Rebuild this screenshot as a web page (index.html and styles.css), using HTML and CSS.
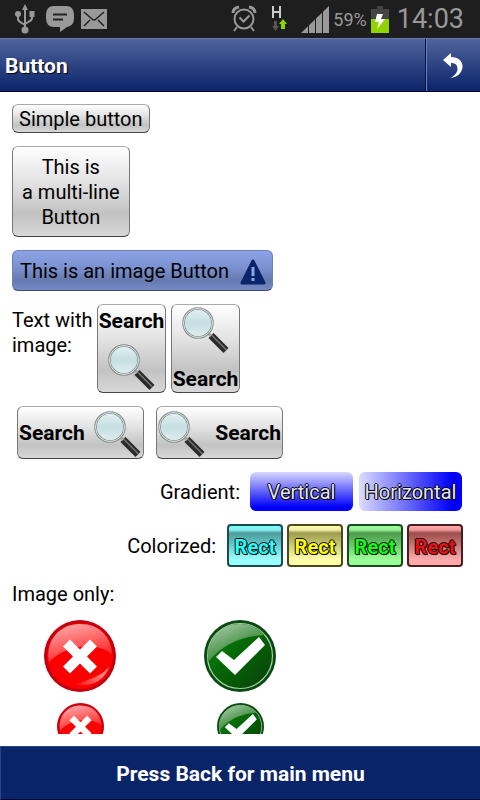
FILE: index.html
```html
<!DOCTYPE html>
<html lang="en">
<head>
  <meta charset="UTF-8">
  <meta name="viewport" content="width=device-width, initial-scale=1.0">
  <title>Button</title>
  <link rel="stylesheet" href="styles.css">
</head>
<body>
  <!-- shared icons -->
  <svg class="sprite" aria-hidden="true">
    <defs>
      <linearGradient id="lens" x1="0" y1="0" x2="0" y2="1">
        <stop offset="0" stop-color="#e2f1f3"/>
        <stop offset="0.5" stop-color="#c5dfe2"/>
        <stop offset="1" stop-color="#e0eeef"/>
      </linearGradient>
      <linearGradient id="red-shine" x1="0" y1="0" x2="0.4" y2="1">
        <stop offset="0" stop-color="#ffb4b4"/>
        <stop offset="1" stop-color="#ff2828"/>
      </linearGradient>
      <linearGradient id="red-glow" x1="0" y1="0.5" x2="1" y2="0.5">
        <stop offset="0" stop-color="#fa0000"/>
        <stop offset="1" stop-color="#ff9a9a"/>
      </linearGradient>
      <linearGradient id="green-base" x1="0" y1="0" x2="1" y2="1">
        <stop offset="0" stop-color="#0a8a0a"/>
        <stop offset="0.5" stop-color="#046404"/>
        <stop offset="1" stop-color="#0b3d0b"/>
      </linearGradient>
      <linearGradient id="green-shine" x1="0" y1="0" x2="0.7" y2="1">
        <stop offset="0" stop-color="#b4d4b4"/>
        <stop offset="1" stop-color="#0d6d0d"/>
      </linearGradient>
    </defs>
    <symbol id="magnifier" viewBox="0 0 48 48">
      <path d="M29 29.500L44 44.500" stroke="#2a2a2a" stroke-width="7"/>
      <path d="M30 29.500L44.500 44" stroke="#777" stroke-width="1.500"/>
      <path d="M26 27l3 3" stroke="#aaa" stroke-width="3"/>
      <circle cx="16" cy="17" r="14.500" fill="url(#lens)" stroke="#858a8a" stroke-width="2.500"/>
      <circle cx="16" cy="17" r="14.500" fill="none" stroke="#dfe4e4" stroke-width="1"/>
    </symbol>
    <symbol id="cross" viewBox="0 0 72 72">
      <circle cx="36" cy="36" r="36" fill="#c40010"/>
      <circle cx="36" cy="36" r="33" fill="#fa0000"/>
      <path d="M5 42C1 20 16 4 36 4s31 13 32 30C50 20 20 26 5 42z" fill="url(#red-shine)"/>
      <path d="M30 65c18 2 30-4 35-18-8 9-16 11-35 18z" fill="url(#red-glow)"/>
      <path d="M26 19.500l10 10 10-10 7 7-10 10 10 10-7 7-10-10-10 10-7-7 10-10-10-10z" fill="#fff"/>
    </symbol>
    <symbol id="check" viewBox="0 0 72 72">
      <circle cx="36" cy="36" r="36" fill="#0a4a10"/>
      <circle cx="36" cy="36" r="32.500" fill="url(#green-base)" stroke="#a8cfa8" stroke-width="1.200"/>
      <path d="M4 42C1 21 15 4 36 4c11 0 19 4 25 11C38 16 19 24 4 42z" fill="url(#green-shine)"/>
      <path d="M12 37l6-6 12 9 25-23 6 8-30 30z" fill="#fff"/>
    </symbol>
  </svg>

  <div class="status-bar">
    <div class="status-left">
      <svg width="20" height="30" viewBox="0 0 20 30" fill="none" stroke="#999" stroke-width="2">
        <path d="M10 4v22M3 11v4q0 2 3 3.500L10 21M17 10v4q0 2-3 3.500L10 20"/>
        <path d="M10 0l3 6H7z" fill="#999" stroke="none"/>
        <circle cx="3" cy="10" r="3" fill="#999" stroke="none"/>
        <path d="M14.500 7h5v6h-5z" fill="#999" stroke="none"/>
        <circle cx="10" cy="26" r="3.500" fill="#999" stroke="none"/>
      </svg>
      <svg width="30" height="28" viewBox="0 0 30 28">
        <path d="M9 1h12q8 0 8 9v3q0 8-7 9l-7 5v-5H9q-8 0-8-9v-3q0-9 8-9z" fill="#999"/>
        <path d="M8 9.500h14M8 14.500h10" stroke="#222" stroke-width="2"/>
      </svg>
      <svg width="26" height="20" viewBox="0 0 26 20">
        <path d="M0 0h26v20H0z" fill="#999"/>
        <path d="M3 3l8 7q2 2 4 0l8-7M3 17l6-6M23 17l-6-6" fill="none" stroke="#222" stroke-width="1.500"/>
      </svg>
    </div>
    <div class="status-right">
      <svg width="26" height="28" viewBox="0 0 26 28" fill="none" stroke="#999" stroke-width="2">
        <circle cx="13" cy="14" r="9.500"/>
        <path d="M8.500 12.500l4 4 6-6M6 22l-3 4M20 22l3 4"/>
        <path d="M2 8q0-5 6-6M24 8q0-5-6-6" stroke-width="3"/>
      </svg>
      <svg class="network" width="16" height="26" viewBox="0 0 16 26">
        <path d="M2 0v12M9 0v12M2 6h7" fill="none" stroke="#ccc" stroke-width="2"/>
        <path d="M3 15h3v5h2l-3.500 5L1 20h2z" fill="#555"/>
        <path d="M10 23v-5H8l4-5 4 5h-2v5z" fill="#8fd400"/>
      </svg>
      <svg class="signal" width="28" height="27" viewBox="0 0 28 27">
        <path d="M0 27L28 0v27z" fill="#999"/>
        <path d="M7.500 16v11M14.500 10v17M21.500 4v23" stroke="#1e1e1e"/>
      </svg>
      <span class="percent">59%</span>
      <svg width="18" height="27" viewBox="0 0 18 27">
        <path d="M6 0h6v3h6v10H0V3h6z" fill="#444"/>
        <path d="M0 13h18v14H0z" fill="#8fd400"/>
        <path d="M6 8h6l-2 5h4L6 23l2-7H4z" fill="#fff"/>
      </svg>
      <span class="clock">14:03</span>
    </div>
  </div>

  <header class="title-bar">
    <h1>Button</h1>
    <button class="back" type="button" aria-label="Back">
      <svg width="20" height="25" viewBox="0 0 20 25">
        <path d="M0 7L8 0v4C15 4 20 8 19.500 14c-.5 6-5 10-12 11 5-3 7-6 7-9 0-4-2-6-6.500-6v4z" fill="#fff"/>
      </svg>
    </button>
  </header>

  <main class="content">
    <button class="btn" type="button">Simple button</button>
    <button class="btn multi-line" type="button">This is<br>a multi-line<br>Button</button>
    <button class="btn btn-blue" type="button">
      This is an image Button
      <svg width="26" height="26" viewBox="0 0 26 26">
        <path d="M13 2L24 24H2z" fill="#0a246a" stroke="#0a246a" stroke-width="3" stroke-linejoin="round"/>
        <path d="M13 8v9M13 19v3" stroke="#8ba3e6" stroke-width="3"/>
      </svg>
    </button>

    <div class="row text-image">
      <p>Text with<br>image:</p>
      <button class="btn search stacked" type="button">Search <svg><use href="#magnifier"/></svg></button>
      <button class="btn search stacked" type="button"><svg><use href="#magnifier"/></svg> Search</button>
    </div>

    <div class="row search-row">
      <button class="btn search" type="button">Search <svg><use href="#magnifier"/></svg></button>
      <button class="btn search" type="button"><svg><use href="#magnifier"/></svg> Search</button>
    </div>

    <div class="row right gradients">
      <span>Gradient:</span>
      <button class="gradient vertical" type="button">Vertical</button>
      <button class="gradient horizontal" type="button">Horizontal</button>
    </div>

    <div class="row right colors">
      <span>Colorized:</span>
      <button class="rect cyan" type="button">Rect</button>
      <button class="rect yellow" type="button">Rect</button>
      <button class="rect green" type="button">Rect</button>
      <button class="rect red" type="button">Rect</button>
    </div>

    <p class="image-label">Image only:</p>
    <div class="image-grid">
      <button type="button" aria-label="Cancel"><svg class="big"><use href="#cross"/></svg></button>
      <button type="button" aria-label="Accept"><svg class="big"><use href="#check"/></svg></button>
      <button type="button" aria-label="Cancel"><svg class="small"><use href="#cross"/></svg></button>
      <button type="button" aria-label="Accept"><svg class="small"><use href="#check"/></svg></button>
    </div>
  </main>

  <footer class="footer">Press Back for main menu</footer>
</body>
</html>
```

FILE: styles.css
```css
* {
  box-sizing: border-box;
}
body {
  margin: 0;
  height: 100vh;
  display: flex;
  flex-direction: column;
  background-color: #fff;
  color: #000;
  font-family: Roboto, sans-serif;
  font-size: 20px;
  line-height: 25px;
}
h1, p {
  margin: 0;
}
svg {
  display: block;
  flex: none;
}
button {
  font: inherit;
  color: inherit;
  margin: 0;
  padding: 0;
  border: none;
  background: none;
  cursor: pointer;
}
.sprite {
  position: absolute;
  width: 0;
  height: 0;
}

.status-bar {
  flex: none;
  height: 38px;
  display: flex;
  justify-content: space-between;
  background-color: #1e1e1e;
  color: #999;
  padding: 0 16px 0 15px;
}
.status-left, .status-right {
  display: flex;
  align-items: center;
}
.status-left {
  gap: 10px;
}
.status-left svg:last-child {
  margin-left: -4px;
}
.network {
  margin-left: 14px;
}
.signal {
  margin: 0 4px 0 14px;
}
.percent {
  font-size: 18px;
  margin-right: 4px;
}
.clock {
  font-size: 27px;
  margin-left: 8px;
}

.title-bar {
  flex: none;
  height: 54px;
  display: flex;
  justify-content: space-between;
  background: linear-gradient(#50649c, #0a246a);
  border-top: 1px solid #6476ac;
  border-bottom: 1px solid #000832;
}
.title-bar h1 {
  padding-left: 5px;
  font-size: 21px;
  font-weight: 700;
  line-height: 54px;
  color: #fff;
  text-shadow: 1px 1px 1px #001;
}
.back {
  width: 55px;
  display: flex;
  align-items: center;
  justify-content: center;
  border-left: 1px solid #000f4a;
  box-shadow: inset 1px 0 #7080b4;
}

.content {
  flex: 1;
  min-height: 0;
  overflow: hidden;
  display: flex;
  flex-direction: column;
  align-items: flex-start;
  gap: 13px;
  padding: 12px 12px 0;
  margin-bottom: 12px;
}
.content > * {
  flex: none;
}

.btn {
  padding: 2px 6px 0;
  border: 1px solid #777;
  border-top-color: #aaa;
  border-bottom-color: #444;
  border-radius: 6px;
  background: linear-gradient(#fff, #e2e2e2 40%, #c2c2c2 75%, #d8d8d8);
}
.multi-line {
  padding: 8px 9px 6px;
}
.btn-blue {
  display: flex;
  align-items: center;
  gap: 11px;
  height: 41px;
  padding: 2px 6px 0 7px;
  border-color: #6d7fb8;
  border-bottom-color: #3f4a6c;
  background: linear-gradient(#8ba3e6, #7c93d2 40%, #6679b0 75%, #748ac6);
}

.row {
  display: flex;
}
.text-image {
  gap: 5px;
}
.text-image p {
  width: 80px;
  padding-top: 4px;
  white-space: nowrap;
}
.search {
  display: flex;
  align-items: center;
  justify-content: space-between;
  width: 127px;
  height: 53px;
  padding: 2px 1px 0;
  font-size: 21px;
  font-weight: 700;
}
.search svg {
  width: 48px;
  height: 48px;
}
.stacked {
  flex-direction: column;
  width: 69px;
  height: 89px;
}
.stacked:nth-of-type(1) {
  padding: 4px 0 1px;
}
.stacked:nth-of-type(2) {
  padding: 1px 0 0;
}
.search-row {
  gap: 12px;
  padding-left: 5px;
}

.right {
  align-self: stretch;
  align-items: center;
  justify-content: flex-end;
  padding-right: 5px;
}
.gradients {
  gap: 6px;
  padding-right: 6px;
}
.right span {
  padding-top: 2px;
}
.gradients span {
  margin-right: 4px;
}
.gradient {
  width: 103px;
  height: 39px;
  padding-top: 2px;
  border-radius: 6px;
  color: #e4e4f4;
  text-shadow: 1px 0 #000, -1px 0 #000, 0 1px #000, 0 -1px #000, 1px 1px #000;
}
.vertical {
  background: linear-gradient(#d8d8ff, #0000f8 90%);
}
.horizontal {
  background: linear-gradient(to right, #dcdcff, #0000f8 90%);
}
.colors {
  gap: 4px;
}
.colors span {
  margin-right: 7px;
}
.rect {
  width: 56px;
  height: 43px;
  padding-top: 3px;
  border: 2px solid;
  border-radius: 4px;
  font-weight: 700;
  text-shadow: 1px 0 #000, -1px 0 #000, 0 1px #000, 0 -1px #000, 1px 1px #000;
}
.cyan {
  color: #2ff;
  border-color: #1d4a4a;
  background: linear-gradient(#7ff 0, #8ee 10%, #4d9c9c 18%, #6cc 50%, #9ff 85%);
}
.yellow {
  color: #ff0;
  border-color: #4a4a1d;
  background: linear-gradient(#ffa 0, #eea 10%, #9c9c4d 18%, #cc7 50%, #ffa 85%);
}
.green {
  color: #1f1;
  border-color: #1d4a1d;
  background: linear-gradient(#9f9 0, #9e9 10%, #4d9c4d 18%, #6c6 50%, #9f9 85%);
}
.red {
  color: #f01010;
  border-color: #4a1d1d;
  background: linear-gradient(#faa 0, #e99 10%, #9c4d4d 18%, #c77 50%, #faa 85%);
}

.image-label {
  padding-top: 2px;
}
.image-grid {
  display: grid;
  grid-template-columns: 136px 184px;
  row-gap: 11px;
  justify-items: center;
}
.big {
  width: 72px;
  height: 72px;
}
.small {
  width: 47px;
  height: 47px;
}

.footer {
  flex: none;
  height: 54px;
  line-height: 54px;
  border: 1px solid #2c4282;
  border-width: 1px 0 1px 1px;
  border-bottom-color: #000832;
  background-color: #0a246a;
  color: #fff;
  font-size: 21px;
  font-weight: 700;
  text-align: center;
}
```
